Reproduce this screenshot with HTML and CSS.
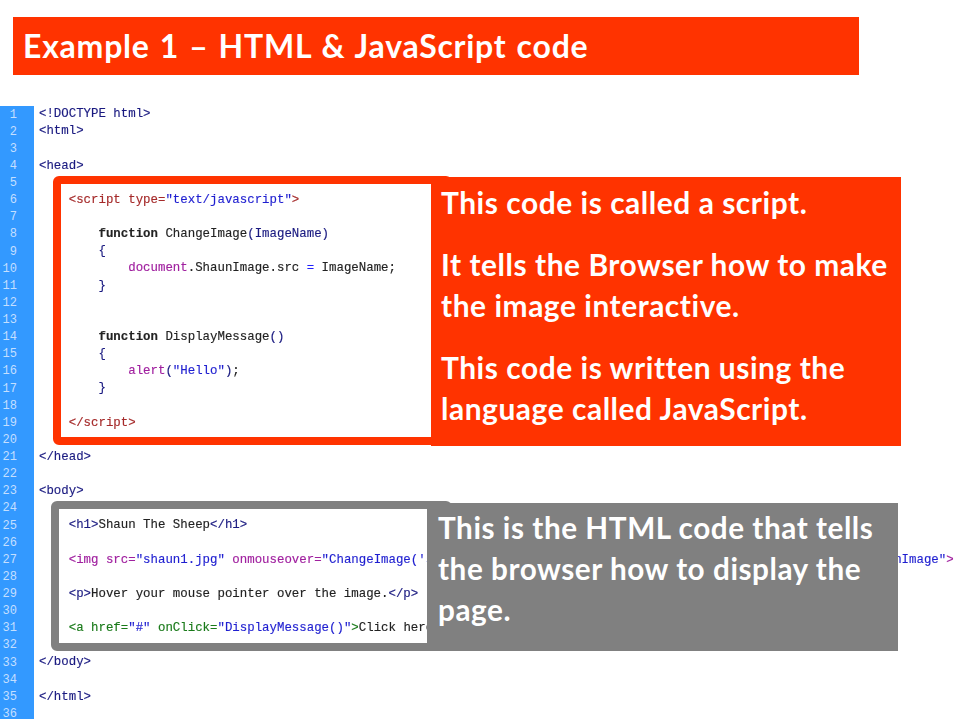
FILE: index.html
```html
<!DOCTYPE html>
<html lang="en">
<head>
<meta charset="utf-8">
<title>Example 1</title>
<link rel="stylesheet" href="styles.css">
</head>
<body>
<main class="slide">
<h1 class="title">Example 1 – HTML &amp; JavaScript code</h1>
<section class="listing">
<pre class="gutter">1
2
3
4
5
6
7
8
9
10
11
12
13
14
15
16
17
18
19
20
21
22
23
24
25
26
27
28
29
30
31
32
33
34
35
36</pre>
<pre class="code"><span class="t">&lt;!DOCTYPE html&gt;</span>
<span class="t">&lt;html&gt;</span>

<span class="t">&lt;head&gt;</span>

    <span class="r">&lt;script type=</span><span class="s">"text/javascript"</span><span class="r">&gt;</span>

        <b>function</b> ChangeImage<span class="t">(ImageName)</span>
        <span class="t">{</span>
            <span class="p">document</span>.ShaunImage.src <span class="b">=</span> ImageName;
        <span class="t">}</span>


        <b>function</b> DisplayMessage<span class="t">()</span>
        <span class="t">{</span>
            <span class="p">alert</span><span class="t">(</span><span class="s">"Hello"</span><span class="t">)</span>;
        <span class="t">}</span>

    <span class="r">&lt;/script&gt;</span>

<span class="t">&lt;/head&gt;</span>

<span class="t">&lt;body&gt;</span>

    <span class="t">&lt;h1&gt;</span>Shaun The Sheep<span class="t">&lt;/h1&gt;</span>

    <span class="p">&lt;img src=</span><span class="s">"shaun1.jpg"</span> <span class="p">onmouseover=</span><span class="s">"ChangeImage('shaun2.jpg')"</span> <span class="p">onmouseout=</span><span class="s">"ChangeImage('shaun1.jpg')"</span> <span class="p">name=</span><span class="s">"ShaunImage"</span><span class="p">&gt;</span>

    <span class="t">&lt;p&gt;</span>Hover your mouse pointer over the image.<span class="t">&lt;/p&gt;</span>

    <span class="g">&lt;a href=</span><span class="s">"#"</span> <span class="g">onClick=</span><span class="s">"DisplayMessage()"</span><span class="g">&gt;</span>Click here<span class="g">&lt;/a&gt;</span>

<span class="t">&lt;/body&gt;</span>

<span class="t">&lt;/html&gt;</span>
</pre>
</section>
<div class="frame frame-red"></div>
<div class="frame frame-grey"></div>
<aside class="note note-red">
<p>This code is called a script.</p>
<p>It tells the Browser how to make the image interactive.</p>
<p>This code is written using the language called JavaScript.</p>
</aside>
<aside class="note note-grey">
<p>This is the HTML code that tells the browser how to display the page.</p>
</aside>
</main>
</body>
</html>
```
FILE: styles.css
```css
* { box-sizing: border-box; }
html, body { margin: 0; padding: 0; background: #fff; }
body { width: 960px; height: 720px; overflow: hidden; }
.slide { position: relative; width: 960px; height: 720px; padding-top: 17px; overflow: hidden; }
.title {
  margin: 0 0 31px 13px;
  width: 846px;
  height: 58px;
  padding-left: 10px;
  background: #ff3300;
  color: #fff;
  font: 700 32px/58px Lato, sans-serif;
  letter-spacing: 0.75px;
  word-spacing: 1.6px;
}
.listing { display: flex; height: 613px; }
.gutter, .code { margin: 0; }
.gutter {
  width: 34px;
  height: 613px;
  padding: 0.6px 17px 0 0;
  background: #3399ff;
  color: #c4dfff;
  text-align: right;
  font: 12px/17.12px "Liberation Mono", monospace;
}
.code {
  padding: 0.3px 0 0 5px;
  color: #222;
  font-family: "Liberation Mono", monospace;
  font-size: 12.4px;
  line-height: 17.12px;
  -webkit-text-stroke: 0.15px;
  filter: blur(0.25px);
}
.code b { font-weight: 700; }
.t { color: #1a1a80; }
.r { color: #a52a2a; }
.s { color: #1f1fd0; }
.p { color: #a0209f; }
.g { color: #1a7a1a; }
.b { color: #2020ff; }
.frame { position: absolute; border-style: solid; border-width: 8px; border-radius: 6px; }
.frame-red { left: 53px; top: 176px; width: 399px; height: 269px; border-color: #ff3300; }
.frame-grey { left: 51px; top: 501px; width: 401px; height: 150px; border-color: #808080; }
.note { position: absolute; color: #fff; font: 700 29.9px/41px Lato, sans-serif; letter-spacing: 0.55px; }
.note p { margin: 0 0 21px; }
.note-red { left: 431px; top: 177px; width: 470px; height: 269px; padding: 5px 10px 0; background: #ff3300; }
.note-grey { left: 427px; top: 503px; width: 471px; height: 148px; padding: 4px 11px 0; background: #808080; font-size: 29.7px; }
```
